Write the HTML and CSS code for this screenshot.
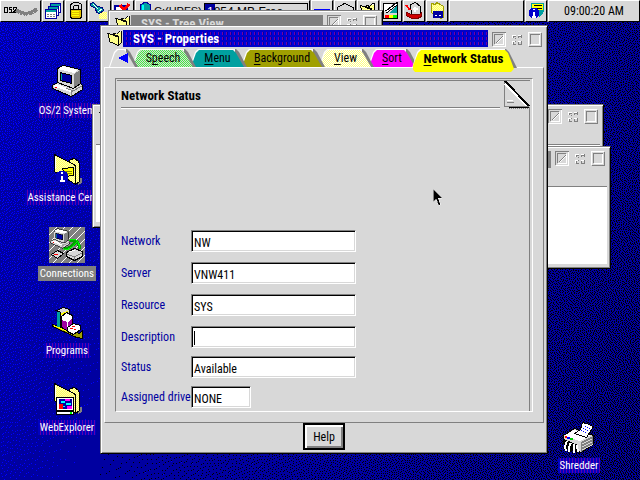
FILE: index.html
```
<!DOCTYPE html>
<html lang="en">
<head>
<meta charset="utf-8">
<title>SYS - Properties</title>
<link rel="stylesheet" href="styles.css">
</head>
<body>
<svg class="defs" aria-hidden="true">
  <defs>
    <pattern id="cream" width="2" height="2" patternUnits="userSpaceOnUse"><path fill="#ffffb0" d="M0 0h2v2H0z"/><path fill="#ffff60" d="M0 0h1v1H0zM1 1h1v1H1z"/></pattern>
    <pattern id="hatch" width="8" height="8" patternUnits="userSpaceOnUse"><path fill="#808080" d="M0 0h8v8H0z"/><path stroke="#fff" d="M-1 9 9-1"/></pattern>
    <symbol id="folder" viewBox="0 0 16 18">
      <path fill="url(#cream)" stroke="#000" d="M5.500 4.500l2-1 2 1 3-3h2v12l-3 3V6.500z"/>
      <path fill="url(#cream)" stroke="#000" d="M.500 3.500 11.500 7.500V16.500L2.500 12.500z"/>
      <path fill="none" stroke="#fff" d="M12 3l2-1"/>
    </symbol>
    <symbol id="bigfolder" viewBox="0 0 32 34">
      <path fill="#808080" d="M27 25h4v5l-4 2z"/>
      <path fill="url(#cream)" stroke="#000" d="M17.500 9.500l2-3 4-1 4 3 1 3v17l-4 3z"/>
      <path fill="url(#cream)" stroke="#000" d="M3.500 1.500l21 11v19l-3-2-18-11z"/>
      <path fill="none" stroke="#fff" d="M4.500 4v12"/>
    </symbol>
    <symbol id="computer" viewBox="0 0 32 32">
      <path fill="#d8d8d8" stroke="#000" d="M6.500 3.500 12.500.5l17 4v15l-7 5-16-6z"/>
      <path fill="#808080" d="M23 9l6-4v14l-6 5z"/>
      <path fill="#fff" d="M7 4l5-3 15 4-4 3z"/>
      <path fill="#d8d8d8" d="M7 5l16 4v14L7 18z"/>
      <path fill="#0000a0" stroke="#000" d="M9.500 7.500l11 3v8l-11-3z"/>
      <path stroke="#00a0a0" d="M10.500 9v6"/>
      <path fill="#d8d8d8" stroke="#000" d="M1.500 20.500l5-3 16 6 7-5 2 2v4l-11 7-19-8z"/>
      <path fill="#fff" d="M2 21l4-2 15 6-2 2z"/>
      <path fill="none" stroke="#808080" d="M20 31v-4l11-6M15 23l7 3"/>
      <path fill="#f00" d="M4 22h2v1H4z"/>
    </symbol>
    <symbol id="b-hide" viewBox="0 0 14 15"><path fill="none" stroke="#808080" d="M.5 14V.5H14M2.500 12V2.500H11M4 11l7-7"/><path fill="none" stroke="#fff" d="M1 14.500h12.500V1M3 12.500h8.500V3M5 11l6-6"/></symbol>
    <symbol id="b-min" viewBox="0 0 14 15"><path fill="none" stroke="#808080" d="M3.500 6V4.500H6M8.500 6V4.500H11M3.500 12v-2M8.500 12v-2M3 12.500h3M8 12.500h4M11.500 3v3M11.500 9v4M5.500 9v1M5 6.500h1"/><path fill="none" stroke="#fff" d="M2.500 6V3.500H6M8 3.500h3M2.500 12V9.500H5M8 9.500h3"/></symbol>
    <symbol id="b-max" viewBox="0 0 14 15"><path fill="none" stroke="#808080" d="M13.500 1v13.500H1M2.500 12V2.500H12"/><path fill="none" stroke="#fff" d="M.5 14V.5H13M11.500 3v9.500H3"/></symbol>
  </defs>
</svg>

<div class="desktop">
  <canvas class="wallpaper" id="wallpaper"></canvas>

  <header class="bar">
    <div class="cell logo"><svg width="38" height="20"><path fill="none" stroke="#000" stroke-width="1" d="M2.500 6.500h3v5h-3zM10 6.500H7.500v2h2v3H7M11 8.500l1-2h2v2l-3 3h3"/><path fill="none" stroke="#808080" stroke-width="4" d="M14 9c5 4 13 6 21-1"/><path stroke="#d8d8d8" stroke-dasharray="1 2" fill="none" d="M17 12c5 3 12 3 16-2"/></svg></div>
    <button class="cell" aria-label="Window list"><svg width="20" height="20"><g stroke="#0000a0" fill="#fff"><path d="M7.500 2.500h10v9h-10z"/><path d="M5.500 5.500h10v9h-10z"/><path d="M2.500 8.500h11v9h-11z"/></g><path stroke="#00a0a0" stroke-width="2" d="M8 4h9M6 7h9M3 10h10"/><path stroke="#808080" stroke-dasharray="2 1" d="M4 13.500h8M4 15.500h8"/></svg></button>
    <button class="cell" aria-label="Lockup"><svg width="20" height="20"><path fill="none" stroke="#000" stroke-width="4" d="M6 10V5q0-2 4-2t4 2v5"/><path fill="none" stroke="#d8d8d8" stroke-width="2" d="M6 10V5q0-2 4-2t4 2v5"/><path fill="#e0c000" stroke="#000" d="M4.500 8.500h11v8l-2 1h-7l-2-1z"/><path stroke="#ff0" d="M6 10.500h7M6 12.500h7M6 14.500h7"/></svg></button>
    <button class="cell find" aria-label="Find"><svg width="22" height="20"><path fill="url(#cream)" d="M10 11h8v7h-8z"/><path fill="#00a0a0" stroke="#000080" d="M1.500 2.500l3-1 4 4 5 1 1 3-4 3-3-1-1-4-5-3z"/><path stroke="#fff" d="M4 3l5 5M9 11l4-3"/></svg></button>
    <button class="cell" aria-label="Shut down"><svg width="20" height="20"><path fill="#fff" stroke="#0000a0" stroke-width="2" d="M2 5h12v12H2z"/><path stroke="#f00" stroke-width="3" d="M7 4l8 9M16 3l-8 9"/></svg></button>
    <div class="cell drive">
      <svg width="18" height="20"><path fill="#00a0a0" stroke="#0000a0" d="M4.500 4q5-5 10 0v10h-10z"/><path stroke="#00ffff" stroke-width="2" d="M7 4v8"/></svg>
      <span class="volume">C:(HPFS)</span><span class="meter"><b>1</b>854 MB Free</span>
    </div>
    <button class="cell" aria-label="Minimized windows"><svg width="20" height="20"><path stroke="#00f" stroke-width="2" d="M2 9h16"/></svg></button>
    <button class="cell" aria-label="Drives"><svg width="20" height="20"><path fill="#d8d8d8" stroke="#000" d="M2.500 6.500l7-4 9 4v6l-8 4-8-4z"/></svg></button>
    <button class="cell" aria-label="Folders"><svg width="18" height="18"><use href="#folder"/></svg></button>
    <button class="cell" aria-label="Settings"><svg width="20" height="20"><path fill="#d8d8d8" stroke="#000" d="M2.500 2.500h14v15h-14z"/><path fill="#fff" d="M3 3h8L6 10H3z"/><path fill="#00a0a0" d="M12 8l4-4v8h-8z"/><path stroke="#000" stroke-width="3" d="M5 11L17 2"/><path stroke="#fff" d="M5 11L16 3"/><path stroke="#f00" stroke-width="3" d="M4 15.500h4"/><path stroke="#ff0" stroke-width="3" d="M8 15.500h4"/><path stroke="#0f0" stroke-width="3" d="M12 15.500h4"/></svg></button>
    <button class="cell" aria-label="Toolkit"><svg width="20" height="20"><path fill="#d8d8d8" stroke="#000" d="M6.500 3.500l5-2 5 4v8h-9z"/><path fill="#d00000" stroke="#800000" d="M2.500 11.500l5 2h8l2-2v4l-4 2h-6l-5-3z"/><path stroke="#f00" stroke-width="2" d="M2 4l4 5"/><path stroke="#fff" stroke-width="2" d="M9 8h5M11 6v5"/></svg></button>
    <button class="cell" aria-label="Templates"><svg width="20" height="20"><path fill="url(#cream)" stroke="#a0a000" d="M4.500 2.500l4 1 1-2 4 2 3 2v11l-3 1-9-6z"/><path fill="#fff" stroke="#0000a0" stroke-width="2" d="M7 11h8v5H7zM11 11v5M7 13h8"/></svg></button>
    <div class="cell space"></div>
    <button class="cell" aria-label="Information"><svg width="20" height="20"><path fill="#00a0a0" stroke="#00a0a0" d="M5.500 2.500h12v8l-4 5-3-3h-5z"/><path fill="#ff0" d="M6 3h11v6H6z"/><path stroke="#000" d="M8 4.500h8M11 7.500h5"/><circle cx="8" cy="12" r="5.500" fill="#00c"/><path stroke="#fff" stroke-width="2" d="M8 8v1M8 11v5M6 16h4"/></svg></button>
    <time class="cell clock">09:00:20 AM</time>
  </header>

  <button class="item os2"><svg width="36" height="36"><use href="#computer" x="2" y="1" width="32" height="32"/></svg><span>OS/2 System</span></button>
  <button class="item assist"><svg width="36" height="36"><use href="#bigfolder" x="2" y="2" width="32" height="34"/><path fill="#ff0" stroke="#000" d="M13.500 17.500l11-1v8l-8 1z"/><path stroke="#808000" d="M15 20.500h8M17 22.500h6"/><circle cx="13" cy="26" r="6.500" fill="#0000c0"/><path stroke="#fff" stroke-width="2" d="M13 21v2M13 25v5M11 30h5"/></svg><span>Assistance Center</span></button>
  <button class="item conn"><svg width="36" height="36"><path fill="url(#hatch)" d="M0 0h36v36H0z"/><path fill="none" stroke="#00a000" stroke-width="3" d="M18 16q10-8 13 6M14 20q4 5 14-6"/><path fill="none" stroke="#0f0" d="M18 15q10-8 13 6M14 21q4 5 14-6"/><use href="#computer" x="1" y="1" width="20" height="21"/><path fill="#d8d8d8" stroke="#000" d="M2.500 27.500l6-4 6 3-6 5z"/><path stroke="#f00" d="M5 27.500h4"/><path fill="#d8d8d8" stroke="#000" d="M17.500 25.500l8-4 8 3v5l-8 4-8-4z"/><path fill="none" stroke="#808080" d="M18 27l7 3 8-4M25.500 30v3"/><path stroke="#fff" d="M20 25l6-2"/></svg><span>Connections</span></button>
  <button class="item prog"><svg width="36" height="36"><path fill="#a0a000" stroke="#000" d="M3.500 20.500l27 9 3-3v8l-6-1-24-11z"/><path fill="#ff0" d="M5 21l18 8v1L4 22z"/><path fill="#d8d8d8" stroke="#000" d="M7.500 6.500l7-3 6 2v17l-9 1V8.500z"/><path fill="#00a0a0" d="M8 8h3v15H8z"/><path fill="#ff0" d="M12 9l7-2v2l-7 2z"/><path fill="#fff" stroke="#000" d="M12.500 12.500l5-4 6 3v12l-5 3-6-3z"/><path fill="#a000a0" d="M13 16l5 2v8l-5-3zM19 18l4-3v4l-4 6z"/><path fill="#fff" stroke="#000" d="M18.500 23.500l6-4 7 2v4l-7 5-6-3z"/><path fill="#f00" d="M23 22h3v1h-3zM21 24h3v1h-3zM25 25h2v1h-2z"/></svg><span>Programs</span></button>
  <button class="item web"><svg width="36" height="36"><use href="#bigfolder" x="2" y="1" width="32" height="34"/><path fill="#fff" stroke="#000" d="M7.500 16.500h17v13h-17zM7.500 30.500h17v3h-17z"/><path fill="#0000a0" d="M10 18h13v10H10z"/><path fill="#0ff" d="M12 20h4v2h-4zM17 22h5v2h-5zM13 25h3v1h-3z"/><path fill="#f00" d="M10 23h4v5h-4z"/><path fill="#f0f" d="M16 18h5v2h-5zM18 25h5v3h-5z"/><path fill="#0f0" d="M21 31h2v2h-2z"/></svg><span>WebExplorer</span></button>
  <button class="item shred"><svg width="36" height="36"><path fill="#d8d8d8" stroke="#000" d="M2.500 16.500l11-7 19 7v9l-13 8-17-9z"/><path fill="#808080" d="M20 23l12-6v8l-12 8z"/><path stroke="#d8d8d8" d="M21 25l10-5M21 28l10-5M21 31l10-5"/><path fill="#fff" d="M3 17l10-6 17 5-11 6z"/><path fill="#fff" stroke="#000" d="M13.500 14.500l6-4 2-7 4 1 7 3-7 11z"/><path fill="none" stroke="#00f" stroke-dasharray="1 2" d="M20 12l6-6M22 13l6-6M24 14l5-5"/><path stroke="#f00" stroke-width="2" d="M4 18h2"/><path stroke="#00f" stroke-width="2" d="M6 19h3"/><path stroke="#0c0" stroke-width="2" d="M9 20h3"/><path fill="#000" d="M3 20l14 6v8l-13-4z"/><path fill="none" stroke="#fff" stroke-width="2" d="M6 22q-3 5-1 10M10 24q-3 4-2 9M13 25q-1 4 0 9M16 26l1 7"/></svg><span>Shredder</span></button>

  <section class="win tree" aria-label="SYS - Tree View">
    <div class="titlebar"><svg class="sysicon"><use href="#folder"/></svg><h2 class="caption">SYS - Tree View</h2><svg class="wb"><use href="#b-hide"/></svg><svg class="wb"><use href="#b-min"/></svg><svg class="wb"><use href="#b-max"/></svg></div>
  </section>
  <section class="win rear" aria-label="Background folder">
    <div class="titlebar"><svg class="sysicon"><use href="#folder"/></svg><span class="caption"></span><svg class="wb"><use href="#b-hide"/></svg><svg class="wb"><use href="#b-min"/></svg><svg class="wb"><use href="#b-max"/></svg></div>
    <div class="pane"></div>
  </section>
  <section class="win front" aria-label="Network folder">
    <div class="titlebar"><span class="caption"></span><svg class="wb"><use href="#b-hide"/></svg><svg class="wb"><use href="#b-min"/></svg><svg class="wb"><use href="#b-max"/></svg></div>
    <div class="pane"></div>
  </section>

  <main class="win props">
    <div class="titlebar">
      <svg class="sysicon"><use href="#folder"/></svg>
      <h1 class="caption">SYS - Properties</h1>
      <button class="wbtn" aria-label="Hide"><svg class="wb"><use href="#b-hide"/></svg></button>
      <button class="wbtn" aria-label="Minimize"><svg class="wb"><use href="#b-min"/></svg></button>
      <button class="wbtn" aria-label="Maximize"><svg class="wb"><use href="#b-max"/></svg></button>
    </div>
    <nav class="tabs">
      <button class="tab back" aria-label="Previous tabs"><svg width="10" height="10"><path fill="#00f" d="M0 5l10-5v10z"/></svg></button>
      <button class="tab speech"><span>S<u>p</u>eech</span></button>
      <button class="tab menu"><span><u>M</u>enu</span></button>
      <button class="tab background"><span><u>B</u>ackground</span></button>
      <button class="tab view"><span><u>V</u>iew</span></button>
      <button class="tab sort"><span><u>S</u>ort</span></button>
      <button class="tab network"><span><u>N</u>etwork Status</span></button>
    </nav>
    <div class="notebook">
      <div class="group">
        <div class="sheet">
          <h2 class="heading">Network Status</h2>
          <svg class="fold" width="27" height="30"><path fill="#d8d8d8" d="M1 0h26v26H1z"/><path fill="none" stroke="#808080" d="M1.500 0v25.500H26"/><path stroke="#fff" stroke-width="2" d="M2 3l22 22"/><path stroke="#000" stroke-width="2" d="M2 0l24 25"/><path stroke="#000" d="M6 26.500h20"/><path stroke="#808080" stroke-dasharray="1 1" d="M6 27.500h20"/><path stroke="#fff" d="M4 19.500h6"/><path stroke="#808080" d="M4 21.500h7"/></svg>
          <form class="form">
            <div class="rows">
              <label for="network">Network</label><input id="network" value="NW">
              <label for="server">Server</label><input id="server" value="VNW411">
              <label for="resource">Resource</label><input id="resource" value="SYS">
              <label for="description">Description</label><input id="description" class="caret">
            </div>
            <div class="rows tight">
              <label for="status">Status</label><input id="status" value="Available">
              <label for="drive">Assigned drive</label><input id="drive" class="short" value="NONE">
            </div>
          </form>
        </div>
      </div>
    </div>
    <footer class="actions"><button class="help">Help</button></footer>
  </main>
  <svg class="pointer" width="10" height="17"><path fill="#000" stroke="#fff" stroke-width=".5" d="M0 0v13l3-3 2.500 6 2-1L5 9h4z"/></svg>
</div>
<script src="wallpaper.js"></script>
</body>
</html>
```
FILE: styles.css
```
* { box-sizing: border-box; }
body { margin: 0; font: 12px/16px "Roboto Condensed", "Liberation Sans", sans-serif; color: #000; }
button, input { font: inherit; color: inherit; border: 0; padding: 0; margin: 0; border-radius: 0; background: none; }
h1, h2 { margin: 0; font-size: 13px; font-weight: bold; }
svg { display: block; flex: none; shape-rendering: crispEdges; }
.defs { position: absolute; width: 0; height: 0; }

.desktop { position: relative; height: 100vh; overflow: hidden; background: #0000a0; }
.wallpaper { position: absolute; inset: 0; }

/* Launch bar */
.bar { position: relative; display: flex; gap: 1px; height: 22px; background: #808080; }
.cell { display: flex; align-items: center; justify-content: center; width: 22px; background: #d8d8d8; border: 1px solid #fff; border-right-color: #000; border-bottom-color: #000; }
.logo { width: 41px; }
.find { width: 23px; }
.drive { width: 175px; white-space: nowrap; font: 12px/16px "Liberation Sans", sans-serif; }
.volume { width: 50px; font-size: 11px; overflow: hidden; }
.meter { flex: 1; height: 16px; margin-right: 1px; padding-left: 2px; border: 1px solid #000; background: linear-gradient(90deg, #0000a0 10px, #d8d8d8 10px); }
.meter b { color: #fff; font-weight: normal; }
.space { flex: 1; }
.clock { width: 92px; }

/* Desktop items */
.item { position: absolute; width: 100px; display: flex; flex-direction: column; align-items: center; gap: 3px; left: 17px; color: #fff; font-size: 11px; }
.item span { padding: 0 2px; line-height: 15px; white-space: nowrap; background: repeating-linear-gradient(90deg, #0000c0 0 2px, #6000a8 2px 3px); }
.os2 { top: 64px; }
.assist { top: 151px; }
.conn { top: 227px; }
.conn span { background: #808080; }
.prog { top: 304px; }
.web { top: 381px; }
.shred { top: 419px; left: auto; right: 11px; }

/* Windows */
.win { position: absolute; background: #d8d8d8; border: 1px solid #808080; border-right-color: #000; border-bottom-color: #000; box-shadow: inset 1px 1px #fff, inset -1px -1px #808080; padding: 4px 3px 3px; }
.titlebar { display: flex; height: 17px; gap: 4px; padding: 0 2px 0 3px; }
.sysicon { width: 16px; height: 17px; }
.caption { flex: 1; padding-left: 10px; margin-left: -4px; line-height: 17px; background: #808080; color: #d8d8d8; }
.wb { width: 14px; height: 15px; }
.wbtn { padding-top: 1px; }
.tree { left: 108px; top: 10px; right: 257px; height: 60px; }
.rear { left: 92px; top: 104px; right: 36px; height: 124px; }
.pane { height: 78px; margin-top: 18px; background: #fff; border-top: 1px solid #808080; }
.front { left: 300px; top: 146px; right: 29px; height: 123px; }
.props { left: 100px; top: 25px; right: 92px; }
.props .caption { color: #fff; background: repeating-linear-gradient(0deg, #0000c8 0 2px, transparent 2px 5px), repeating-linear-gradient(90deg, #0000a0 0 1px, #0000e0 1px 3px, #7000a0 3px 4px); }

/* Notebook tabs */
.tabs { display: flex; height: 18px; margin-top: 2px; padding-left: 11px; }
.tab { position: relative; height: 18px; white-space: nowrap; --face: #d8d8d8; }
.tab::before, .tab::after { content: ""; position: absolute; inset: 0 0 0 -6px; clip-path: polygon(0 100%, 5px 3px, 8px 0, calc(100% - 11px) 0, calc(100% - 8px) 3px, 100% 100%); }
.tab::before { background: linear-gradient(90deg, #fff calc(100% - 12px), #808080 0); }
.tab::after { top: 1px; left: -5px; right: 3px; background: var(--face); }
.tab span, .tab svg { position: relative; z-index: 1; }
.tab svg { margin-left: 3px; }
.tab span { right: 4px; }
.tab u { text-underline-offset: 2px; }
.back { width: 23px; z-index: 6; }
.speech { width: 58px; z-index: 5; --face: repeating-conic-gradient(#40f040 0 25%, #d8d8d8 0 50%) 0 0 / 2px 2px; }
.menu { width: 51px; z-index: 4; --face: #00a0a0; }
.background { width: 78px; z-index: 3; --face: #a0a000; }
.view { width: 49px; z-index: 2; --face: repeating-conic-gradient(#ffff80 0 25%, #fff 0 50%) 0 0 / 2px 2px; }
.sort { width: 44px; z-index: 1; --face: #ff00ff; }
.network { width: 99px; height: 23px; z-index: 7; --face: #ffff00; font-size: 13px; font-weight: bold; padding-bottom: 4px; }
.network::before { bottom: 4px; }
.network::after { clip-path: polygon(0 90%, 0 70%, 5px 3px, 8px 0, calc(100% - 9px) 0, calc(100% - 6px) 3px, 100% 85%, calc(100% - 3px) 100%, 2px 100%); }

.notebook { padding: 10px; border: 1px solid #fff; border-right-color: #808080; border-bottom-color: #808080; }
.group { padding: 1px 2px 0 1px; border: 1px solid #808080; border-right-color: #fff; border-bottom-color: #fff; }
.sheet { position: relative; padding: 0 0 3px 4px; border-top: 1px solid #808080; border-right: 1px solid #808080; }
.heading { padding: 7px 0 3px; margin-right: 29px; border-bottom: 1px solid #808080; box-shadow: 0 1px #fff; }
.fold { position: absolute; top: 0; right: -1px; }
.form { margin-top: 122px; }
.rows { display: grid; grid-template-columns: 70px minmax(0, 165px); row-gap: 10px; margin-bottom: 8px; align-items: center; }
.tight { row-gap: 8px; margin-bottom: 0; }
.rows label { color: #0000a0; white-space: nowrap; }
.rows input { width: 100%; height: 22px; padding: 3px 2px 0; background: #fff; border: 1px solid #808080; border-right-color: #fff; border-bottom-color: #fff; box-shadow: inset 1px 1px #000, inset -1px -1px #d8d8d8; }
.rows .short { width: 60px; }
.rows .caret { background: linear-gradient(#000, #000) 2px 4px / 1px 14px no-repeat #fff; }

.actions { display: flex; justify-content: center; }
.help { width: 42px; height: 27px; border: 2px solid #000; background: #d8d8d8; box-shadow: inset 2px 2px #fff, inset -2px -2px #808080; }
.pointer { position: absolute; left: 433px; top: 189px; }
```
FILE: wallpaper.js
```
// Dithered blue wallpaper: error diffusion over a slow diagonal gradient.
(function () {
  var c = document.getElementById("wallpaper");
  var w = c.width = window.innerWidth, h = c.height = window.innerHeight;
  var g = c.getContext("2d"), img = g.createImageData(w, h);
  var err = new Float32Array((w + 2) * (h + 1)), seed = 7;
  for (var y = 0; y < h; y++) {
    for (var x = 0; x < w; x++) {
      seed = (seed * 1103515245 + 12345) % 2147483648;
      var i = y * (w + 2) + x + 1;
      var base = 190 - 72 * (x / w) - 22 * (y / h);
      var v = base + err[i];
      var t = v + (seed / 2147483648 - 0.5) * 60;
      var q = t < 80 ? 0 : t < 208 ? 160 : 255;
      var e = v - q;
      err[i + 1] += e * 7 / 16;
      err[i + w + 1] += e * 3 / 16;
      err[i + w + 2] += e * 5 / 16;
      err[i + w + 3] += e / 16;
      var p = (y * w + x) * 4;
      img.data[p + 2] = q;
      img.data[p + 3] = 255;
    }
  }
  g.putImageData(img, 0, 0);
})();
```
